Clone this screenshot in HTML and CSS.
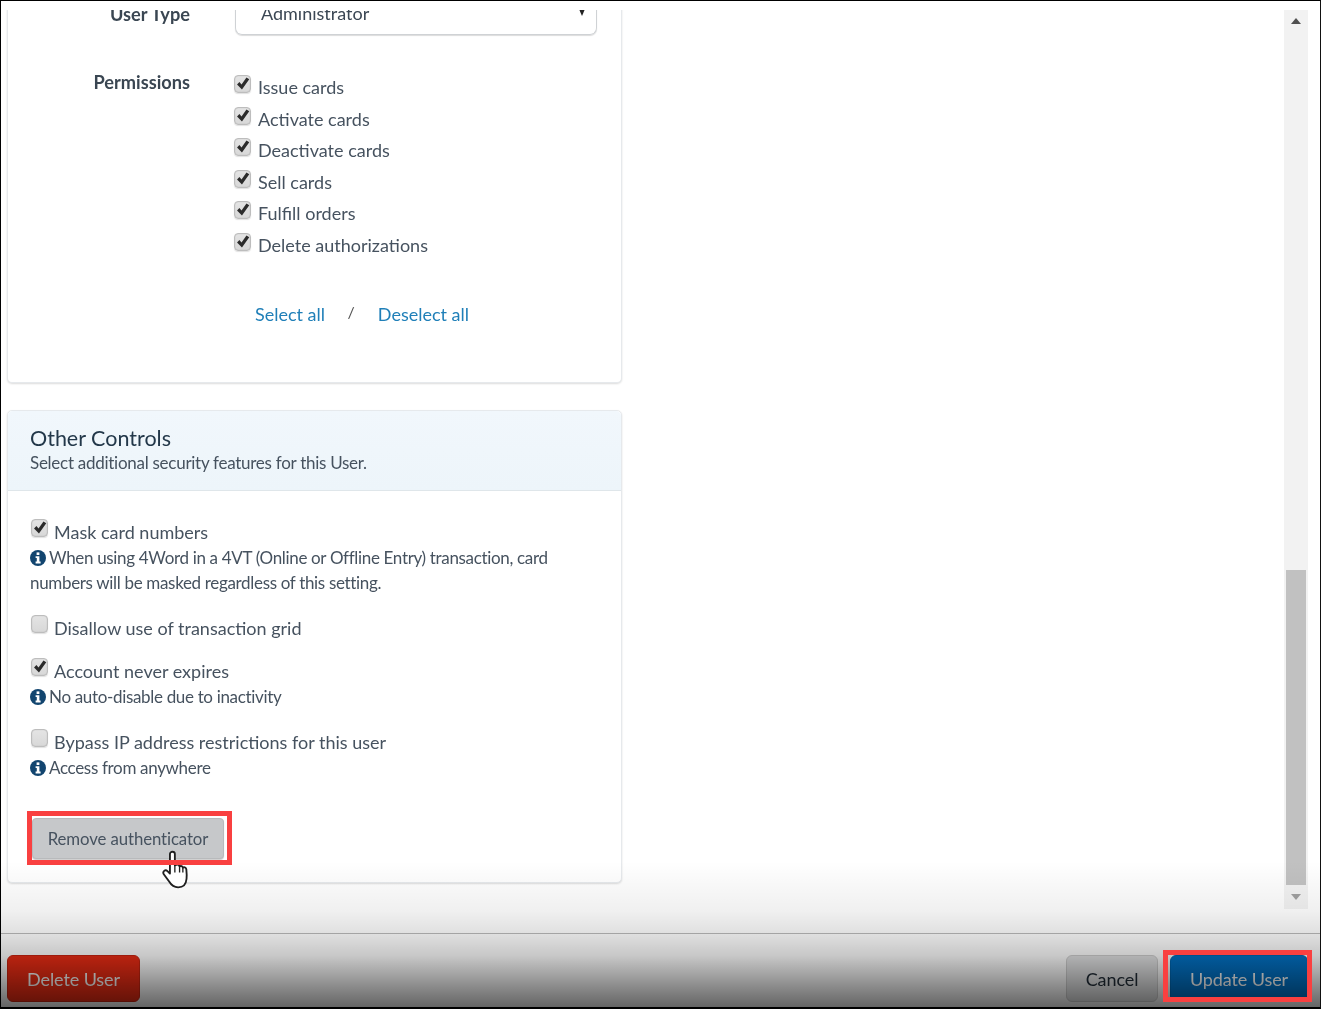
FILE: index.html
```html
<!DOCTYPE html>
<html lang="en">
<head>
<meta charset="utf-8">
<title>Edit User</title>
<link rel="stylesheet" href="styles.css">
</head>
<body>
<svg class="defs" width="0" height="0" aria-hidden="true">
  <symbol id="tick" viewBox="1.5 1.5 14 14"><path d="M3.4 9.4 L5.6 7.2 L7.6 9.4 L12.2 2.8 L14.8 4.6 L8 14 Z" fill="#2b2b2b"/></symbol>
  <symbol id="info" viewBox="0 0 16 16"><circle cx="8" cy="8" r="8" fill="#12456f"/><rect x="6.6" y="2.4" width="2.8" height="2.6" fill="#fff"/><path d="M5.6 6.2 H9.4 V11.6 H10.6 V13.4 H5.6 V11.6 H6.8 V8 H5.6 Z" fill="#fff"/></symbol>
</svg>
<div class="screen">
  <div class="workspace">
    <div class="pane">
      <div class="column">
        <section class="card card-perms">
          <div class="form-row row-type">
            <div class="form-label">User Type</div>
            <div class="select"><span>Administrator</span><i class="select-arrow"></i></div>
          </div>
          <div class="form-row row-perms">
            <div class="form-label">Permissions</div>
            <div class="perm-list">
              <label class="check perm"><span class="box"><svg><use href="#tick"/></svg></span>Issue cards</label>
              <label class="check perm"><span class="box"><svg><use href="#tick"/></svg></span>Activate cards</label>
              <label class="check perm"><span class="box"><svg><use href="#tick"/></svg></span>Deactivate cards</label>
              <label class="check perm"><span class="box"><svg><use href="#tick"/></svg></span>Sell cards</label>
              <label class="check perm"><span class="box"><svg><use href="#tick"/></svg></span>Fulfill orders</label>
              <label class="check perm"><span class="box"><svg><use href="#tick"/></svg></span>Delete authorizations</label>
            </div>
          </div>
          <div class="select-links"><a href="#">Select all</a><span class="slash">/</span><a href="#">Deselect all</a></div>
        </section>
        <section class="card card-other">
          <header class="card-head">
            <h2>Other Controls</h2>
            <p>Select additional security features for this User.</p>
          </header>
          <div class="card-body">
            <div class="control">
              <label class="check"><span class="box"><svg><use href="#tick"/></svg></span>Mask card numbers</label>
              <p class="hint"><svg class="info"><use href="#info"/></svg>When using 4Word in a 4VT (Online or Offline Entry) transaction, card numbers will be masked regardless of this setting.</p>
            </div>
            <div class="control">
              <label class="check"><span class="box"></span>Disallow use of transaction grid</label>
            </div>
            <div class="control">
              <label class="check"><span class="box"><svg><use href="#tick"/></svg></span>Account never expires</label>
              <p class="hint"><svg class="info"><use href="#info"/></svg>No auto-disable due to inactivity</p>
            </div>
            <div class="control">
              <label class="check"><span class="box"></span>Bypass IP address restrictions for this user</label>
              <p class="hint"><svg class="info"><use href="#info"/></svg>Access from anywhere</p>
            </div>
            <button class="btn btn-remove" type="button">Remove authenticator</button>
          </div>
        </section>
      </div>
    </div>
    <div class="scrollbar">
      <i class="arrow arrow-up"></i>
      <div class="track"><div class="thumb"></div></div>
      <i class="arrow arrow-down"></i>
    </div>
  </div>
  <footer class="footer">
    <button class="btn btn-delete" type="button">Delete User</button>
    <div class="footer-actions">
      <button class="btn btn-cancel" type="button">Cancel</button>
      <button class="btn btn-update" type="button">Update User</button>
    </div>
  </footer>
  <div class="fade"></div>
  <svg class="hand" viewBox="0 0 30 40" width="31" height="41" aria-hidden="true">
    <path d="M8.6 4 C8.6 1 13.4 1 13.4 4 V15 L15 14.4 C16.4 14 17.6 14.6 18 16 C19.4 15.2 20.8 15.8 21.2 17.2 C22.8 16.4 24.4 17.2 24.6 19 C24.9 22 25.2 25 24.8 28 C24.4 33 21.6 36.4 16.6 36.4 C12 36.4 10 34.4 8 31 L2.6 23.6 C1 21 4 18.6 6.2 20.6 L8.6 23 Z" fill="#fff" stroke="#1f1f1f" stroke-width="1.8" stroke-linejoin="round"/>
    <path d="M13.4 15 V22 M18 16 V22 M21.2 17.2 V22" stroke="#1f1f1f" stroke-width="1.3" fill="none"/>
  </svg>
  <div class="highlight highlight-remove"></div>
  <div class="highlight highlight-update"></div>
</div>
</body>
</html>
```

FILE: styles.css
```css
* { box-sizing: border-box; }
html, body { margin: 0; padding: 0; background: #fff; }
body { font-family: Lato, "Open Sans", sans-serif; color: #3b4754; }
.defs { position: absolute; }
.screen {
  position: relative;
  width: 1321px;
  height: 1009px;
  overflow: hidden;
  border-top: 1px solid #000;
  border-left: 1px solid #000;
  border-right: 1px solid #111;
  border-bottom: 2px solid #000;
  display: flex;
  flex-direction: column;
  background: #fff;
}
.workspace { flex: none; height: 932px; padding-top: 9px; display: flex; }
.pane { flex: none; width: 1283px; height: 923px; overflow: hidden; padding-left: 6px; filter: blur(.35px); }
.column { width: 615px; display: flex; flex-direction: column; gap: 27px; }
.card {
  background: #fff;
  border: 1px solid #e6e9ec;
  border-radius: 5px;
  box-shadow: 0 1px 2px rgba(0,0,0,.14);
}
.card-perms {
  border-top: 0;
  border-radius: 0 0 5px 5px;
  margin-top: -20px;
  height: 393px;
}
.form-row { display: grid; grid-template-columns: 182px 362px; column-gap: 45px; }
.form-label { text-align: right; font-size: 18.2px; font-weight: 700; line-height: 22px; color: #3a4652; }
.row-type { height: 46px; padding-top: 13px; }
.select {
  position: relative;
  height: 39px;
  margin-top: -7px;
  border: 1px solid #cfd2d5;
  border-top: 0;
  border-radius: 0 0 7px 7px;
  box-shadow: 0 1px 1px rgba(0,0,0,.14);
  padding: 6px 0 0 25px;
  font-size: 18px;
  line-height: 22px;
}
.select-arrow {
  position: absolute;
  right: 11px;
  top: 13px;
  border-left: 3.5px solid transparent;
  border-right: 3.5px solid transparent;
  border-top: 7px solid #222;
}
.row-perms { margin-top: 40px; }
.row-perms .form-label { margin-top: -5px; }
.perm-list { display: flex; flex-direction: column; gap: 9.5px; }
.check {
  display: flex;
  align-items: flex-start;
  gap: 6px;
  font-size: 18px;
  line-height: 22px;
  color: #46525f;
}
.perm { height: 22px; gap: 7px; }
.box {
  flex: none;
  width: 17px;
  height: 18px;
  margin-top: -2px;
  border: 1px solid #bdbdbd;
  border-radius: 4px;
  background: linear-gradient(#e4e4e4, #d8d8d8);
  box-shadow: inset 0 0 1px rgba(0,0,0,.25), 0 1px 1px rgba(0,0,0,.12);
  display: block;
}
.perm .box { margin: -1px 0 0 -1px; }
.card-body .box { margin-left: 1px; }
.box svg { display: block; width: 15px; height: 15px; }
.select-links {
  margin: 47px 0 0 247px;
  display: flex;
  font-size: 18px;
  line-height: 22px;
}
.select-links a { color: #1f7fb8; text-decoration: none; }
.slash { margin: -2px 23px 0 22.5px; color: #555; font-size: 16px; }
.card-other { height: 473px; }
.card-head {
  height: 80px;
  padding: 14px 22px 0;
  background: linear-gradient(#f1f7fc, #edf5fa);
  border-bottom: 1px solid #dfe6ea;
  border-radius: 5px 5px 0 0;
}
.card-head h2 { margin: 0; font-size: 21.5px; font-weight: 400; line-height: 26px; color: #23384a; }
.card-head p { margin: 0; font-size: 17px; line-height: 23px; letter-spacing: -.27px; color: #46525f; }
.card-body { padding: 30px 22px 0; }
.control { margin-bottom: 21.6px; }
.hint { margin: 2px 0 0; font-size: 17px; line-height: 25px; letter-spacing: -.33px; color: #46525f; width: 540px; }
.info { display: inline-block; width: 16px; height: 16px; margin-right: 3px; vertical-align: -2px; }
.btn {
  font-family: inherit;
  border-radius: 6px;
  border: 1px solid transparent;
  padding: 0;
  font-size: 18px;
  letter-spacing: -.1px;
}
.btn-remove {
  display: block;
  width: 192px;
  height: 41px;
  margin: 38px 0 0 2px;
  background: #c6c8ca;
  border-color: #b8babc;
  border-radius: 4px;
  color: #46525f;
  font-size: 16.8px;
  box-shadow: 0 1px 1px rgba(0,0,0,.2);
}
.footer {
  flex: 1;
  border-top: 1px solid #bbb;
  padding: 21px 12px 0 6px;
  display: flex;
  justify-content: space-between;
  background: #fff;
  filter: blur(.35px);
}
.footer-actions { display: flex; gap: 12px; }
.btn-delete { width: 133px; height: 47px; background: #ec2c14; border-color: #c82410; color: #fff; }
.btn-cancel { width: 92px; height: 47px; background: #e3e4e5; border-color: #cfcfcf; color: #222d38; }
.btn-update { width: 138px; height: 47px; background: #0273c7; border-color: #0068b4; color: #fff; }
.fade {
  position: absolute;
  left: 0;
  right: 0;
  top: 860px;
  bottom: 0;
  pointer-events: none;
  background: linear-gradient(rgba(0,0,0,0) 0, rgba(0,0,0,.06) 50px, rgba(0,0,0,.12) 72px, rgba(0,0,0,.22) 95px, rgba(0,0,0,.45) 125px, rgba(0,0,0,.62) 148px);
}
.highlight { position: absolute; border: 5px solid #f94040; pointer-events: none; }
.highlight-remove { left: 26px; top: 810px; width: 205px; height: 54px; }
.highlight-update { left: 1162px; top: 949px; width: 149px; height: 52px; }
.hand { position: absolute; left: 160px; top: 849px; }
.scrollbar { flex: none; width: 24px; height: 899px; background: #f2f2f2; display: flex; flex-direction: column; align-items: center; padding-top: 8px; }
.arrow { display: block; flex: none; border-left: 5.5px solid transparent; border-right: 5.5px solid transparent; }
.arrow-up { border-bottom: 6px solid #505050; }
.arrow-down { border-top: 6px solid #a0a0a0; margin-bottom: 9px; }
.track { flex: 1; width: 100%; padding: 0 2px 9px; display: flex; flex-direction: column; justify-content: flex-end; }
.thumb { height: 315px; background: #c1c1c1; }
```
